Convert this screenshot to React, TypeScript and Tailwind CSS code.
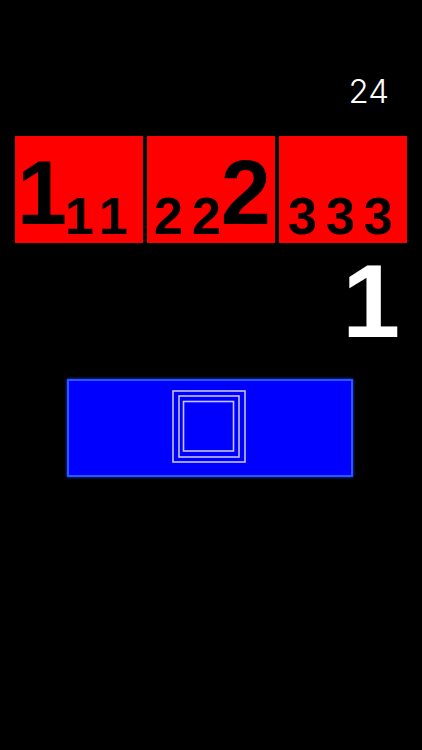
const sans = { fontFamily: '"Liberation Sans", Arial, sans-serif' };

function Tile({ children }: { children: React.ReactNode }) {
	return (
		<div className="flex h-[107px] w-[128px] items-end bg-[#ff0000] text-black">
			{children}
		</div>
	);
}

function Small({ children, className = "" }: { children: React.ReactNode; className?: string }) {
	return (
		<span className={`pb-[1px] text-[52px] leading-none font-bold ${className}`}>{children}</span>
	);
}

function Squares() {
	return (
		<svg width="76" height="76" viewBox="0 0 76 76" fill="none">
			<rect x="1" y="1" width="72" height="71" stroke="#c4c4ff" strokeWidth="1.6" />
			<rect x="7" y="6" width="60" height="61" stroke="#c4c4ff" strokeWidth="1.6" />
			<rect x="11.5" y="11.5" width="50" height="49.5" stroke="#c4c4ff" strokeWidth="1.6" />
		</svg>
	);
}

export default function App() {
	return (
		<div className="h-[750px] w-[422px] bg-black" style={sans}>
			{/* score */}
			<div className="flex justify-end pr-[33px] pt-[75px]">
				<span
					className="text-[33px] leading-none font-light text-white"
					style={{ fontFamily: 'Inter, "Open Sans", sans-serif' }}
				>
					24
				</span>
			</div>

			{/* tiles */}
			<div className="mt-[28px] flex gap-[4px] pl-[15px]">
				<Tile>
					<span className="mb-[5px] ml-[2px] text-[90px] leading-none font-bold">1</span>
					<Small className="ml-[-2px]">1</Small>
					<Small className="ml-[5px]">1</Small>
				</Tile>
				<Tile>
					<Small className="ml-[7px]">2</Small>
					<Small className="ml-[9px]">2</Small>
					<span className="ml-[0px] mb-[5px] text-[90px] leading-none font-bold">2</span>
				</Tile>
				<Tile>
					<Small className="ml-[9px]">3</Small>
					<Small className="ml-[9px]">3</Small>
					<Small className="ml-[9px]">3</Small>
				</Tile>
			</div>

			{/* current */}
			<div className="flex justify-end pr-[22px]">
				<span className="mt-[6px] text-[104px] leading-none font-bold text-white">1</span>
			</div>

			{/* button */}
			<div className="mt-[26px] pl-[67px]">
				<div className="flex h-[98px] w-[286px] items-center justify-center border-2 border-[#2a55ff] bg-[#0000ff] shadow-[0_0_3px_#1f3fff]">
					<Squares />
				</div>
			</div>
		</div>
	);
}
